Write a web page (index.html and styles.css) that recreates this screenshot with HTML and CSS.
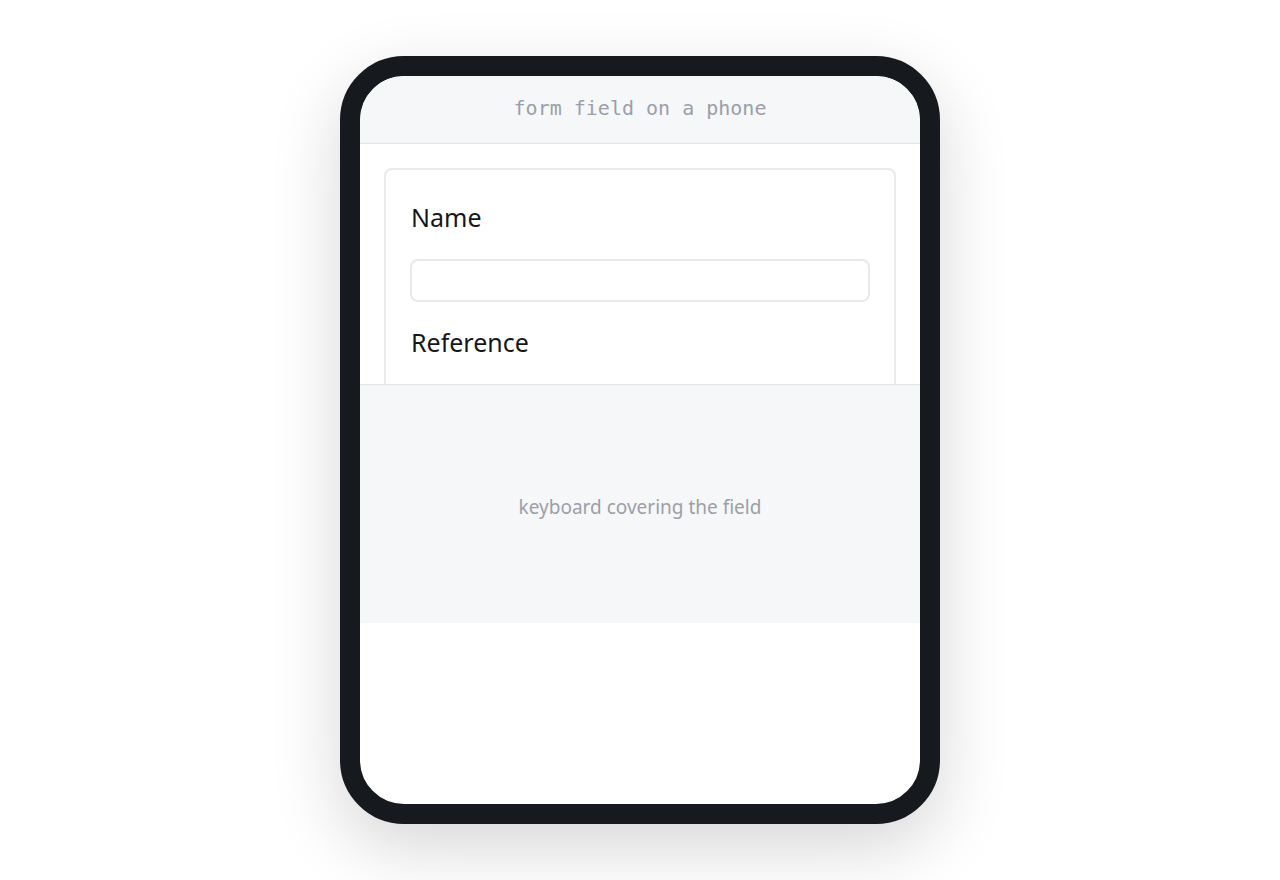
FILE: index.html
```html
<!DOCTYPE html>
<html lang="en">
<head>
<meta charset="utf-8">
<title>form field on a phone</title>
<link rel="stylesheet" href="styles.css">
</head>
<body>
<div class="stage">
  <div class="phone">
    <div class="screen">
      <div class="topbar">form field on a phone</div>
      <div class="content">
        <div class="card">
          <label class="label" for="name">Name</label>
          <input class="input" id="name" type="text">
          <label class="label" for="ref">Reference</label>
          <input class="input" id="ref" type="text">
        </div>
      </div>
      <div class="keyboard">keyboard covering the field</div>
    </div>
  </div>
</div>
</body>
</html>
```
FILE: styles.css
```css
html, body {
  margin: 0;
  padding: 0;
  background: #ffffff;
}
.stage {
  width: 1280px;
  height: 880px;
  display: flex;
  align-items: center;
  justify-content: center;
}
.phone {
  width: 560px;
  height: 728px;
  border: 20px solid #16191e;
  border-radius: 64px;
  background: #ffffff;
  box-shadow: 0 24px 70px rgba(0, 0, 0, 0.16);
  overflow: hidden;
}
.screen {
  height: 100%;
  display: flex;
  flex-direction: column;
  border-radius: 44px;
  overflow: hidden;
}
.topbar {
  height: 63px;
  padding-bottom: 4px;
  flex: none;
  display: flex;
  align-items: center;
  justify-content: center;
  background: #f6f7f9;
  border-bottom: 1px solid #e3e5e9;
  font-family: "DejaVu Sans Mono", "Liberation Mono", monospace;
  font-size: 20px;
  color: #9a9fa8;
}
.content {
  height: 216px;
  flex: none;
  padding: 24px 24px 0;
  overflow: hidden;
}
.card {
  border: 2px solid #e8e9ec;
  border-radius: 8px;
  padding: 22px 24px;
  display: flex;
  flex-direction: column;
  font-family: "Noto Sans", "Open Sans", sans-serif;
}
.label {
  font-size: 25px;
  line-height: 34px;
  color: #15171a;
  padding: 8px 0 0 1px;
}
.input {
  height: 43px;
  box-sizing: border-box;
  margin: 25px 0 15px;
  border: 2px solid #e8e9ec;
  border-radius: 8px;
  background: #ffffff;
  padding: 0 12px;
  font-size: 18px;
}
.keyboard {
  height: 232px;
  padding-top: 6px;
  flex: none;
  background: #f6f7f9;
  border-top: 1px solid #e3e5e9;
  display: flex;
  align-items: center;
  justify-content: center;
  font-family: "Noto Sans", "Open Sans", sans-serif;
  font-size: 19px;
  color: #9b9fa8;
}
```
